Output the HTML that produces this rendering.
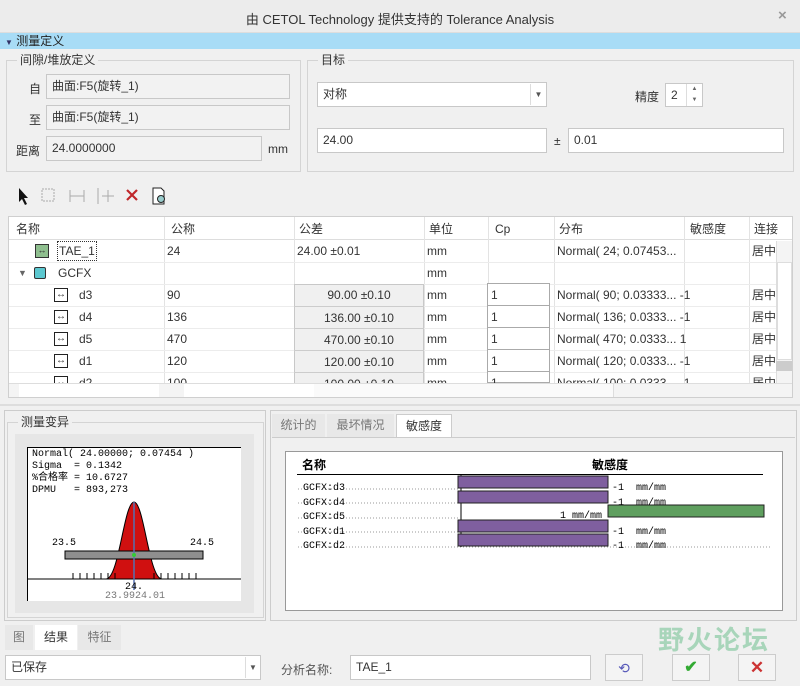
<!DOCTYPE html>
<html><head><meta charset="utf-8"><style>
*{box-sizing:border-box;margin:0;padding:0}
body{width:800px;height:686px;background:#f0f0f0;font-family:"Liberation Sans","Noto Sans CJK SC",sans-serif;font-size:12px;color:#333;position:relative;overflow:hidden}
.a{position:absolute}
.in{position:absolute;background:#fff;border:1px solid #c8c8c8;padding-left:5px;line-height:23px;font-size:12px;color:#333}
.ro{background:#f2f2f2}
.grp{position:absolute;border:1px solid #d4d4d4}
.gt{position:absolute;background:#f0f0f0;padding:0 3px;top:-9px;left:10px;line-height:16px;font-size:12px}
.tbl{position:absolute;left:8px;top:216px;width:785px;height:182px;background:#fff;border:1px solid #cfcfcf;overflow:hidden}
.c{position:absolute;line-height:22px;height:22px;white-space:nowrap;overflow:hidden}
.vl{position:absolute;top:0;width:1px;background:#e3e3e3}
.hl{position:absolute;left:0;height:1px;background:#ececec}
.mono{font-family:"Liberation Mono","Noto Sans CJK SC",monospace}
.dim{position:absolute;width:14px;height:14px;border:1px solid #222;background:#fff;font-size:10px;line-height:11px;text-align:center}
</style></head><body>
<div class="a" style="left:0;top:0;width:800px;height:33px;background:#ececec;border-bottom:1px solid #ddd"></div>
<div class="a" style="left:0;top:9px;width:800px;text-align:center;font-size:13px;color:#333">由 CETOL Technology 提供支持的 Tolerance Analysis</div>
<div class="a" style="left:778px;top:7px;font-size:15px;color:#999;font-weight:bold">×</div>
<div class="a" style="left:0;top:33px;width:800px;height:16px;background:#a8dcf6"></div>
<div class="a" style="left:5px;top:33px;line-height:16px;font-size:12px;color:#222"><span style="font-size:8px;color:#336">▼</span> 测量定义</div>

<div class="grp" style="left:6px;top:60px;width:295px;height:112px"><div class="gt">间隙/堆放定义</div></div>
<div class="a" style="left:29px;top:80px">自</div>
<div class="in ro" style="left:46px;top:74px;width:244px;height:25px">曲面:F5(旋转_1)</div>
<div class="a" style="left:29px;top:111px">至</div>
<div class="in ro" style="left:46px;top:105px;width:244px;height:25px">曲面:F5(旋转_1)</div>
<div class="a" style="left:16px;top:142px">距离</div>
<div class="in ro" style="left:46px;top:136px;width:216px;height:25px">24.0000000</div>
<div class="a" style="left:268px;top:142px">mm</div>

<div class="grp" style="left:307px;top:60px;width:487px;height:112px"><div class="gt">目标</div></div>
<div class="in" style="left:317px;top:82px;width:230px;height:25px">对称</div>
<div class="a" style="left:530px;top:84px;width:16px;height:21px;border-left:1px solid #ddd;font-size:8px;text-align:center;line-height:21px;color:#555">▼</div>
<div class="a" style="left:635px;top:88px">精度</div>
<div class="in" style="left:665px;top:83px;width:38px;height:24px">2</div>
<div class="a" style="left:686px;top:84px;width:16px;height:22px;border-left:1px solid #ddd;font-size:6px;text-align:center;line-height:11px;color:#666">▲<br>▼</div>
<div class="in" style="left:317px;top:128px;width:230px;height:25px">24.00</div>
<div class="a" style="left:554px;top:134px">±</div>
<div class="in" style="left:568px;top:128px;width:216px;height:25px">0.01</div>

<!-- toolbar -->
<svg class="a" style="left:12px;top:184px" width="170" height="22">
<path d="M7 4 L7 18 L10 15 L13 21 L15 20 L12 14 L16 14 Z" fill="#111"/>
<rect x="30" y="5" width="12" height="12" fill="none" stroke="#aaa" stroke-dasharray="2,1"/>
<path d="M58 6v12M72 6v12M58 12h14" stroke="#aaa" fill="none"/>
<path d="M86 4v16M90 12h12M96 6v12" stroke="#aaa" fill="none"/>
<path d="M115 6l10 10M125 6l-10 10" stroke="#c0262a" stroke-width="2.2"/>
<path d="M141 4h8l3 3v13h-11z" fill="#fff" stroke="#222"/><circle cx="149" cy="15" r="3.5" fill="#9cc" stroke="#222"/>
</svg>

<!-- table -->
<div class="tbl">
<div class="a" style="left:0;top:0;width:785px;height:23px;border-bottom:1px solid #ddd"></div>
<div class="vl" style="left:155px;height:166px"></div><div class="vl" style="left:285px;height:166px"></div><div class="vl" style="left:415px;height:166px"></div><div class="vl" style="left:479px;height:166px"></div><div class="vl" style="left:545px;height:166px"></div><div class="vl" style="left:675px;height:166px"></div><div class="vl" style="left:740px;height:166px"></div>
<div class="c" style="left:7px;top:1px">名称</div><div class="c" style="left:162px;top:1px">公称</div><div class="c" style="left:290px;top:1px">公差</div><div class="c" style="left:420px;top:1px">单位</div><div class="c" style="left:486px;top:1px">Cp</div><div class="c" style="left:550px;top:1px">分布</div><div class="c" style="left:681px;top:1px">敏感度</div><div class="c" style="left:745px;top:1px">连接</div>
<div class="hl" style="top:45px;width:767px"></div><div class="hl" style="top:67px;width:767px"></div><div class="hl" style="top:89px;width:767px"></div><div class="hl" style="top:111px;width:767px"></div><div class="hl" style="top:133px;width:767px"></div><div class="hl" style="top:155px;width:767px"></div>
<!-- row TAE -->
<div class="a" style="left:26px;top:27px;width:14px;height:14px;background:#8fbf8f;border:1px solid #333;font-size:9px;line-height:11px;text-align:center">↔</div>
<div class="c" style="left:48px;top:23px;border:1px dotted #333;line-height:18px;height:20px;top:24px;padding:0 1px">TAE_1</div>
<div class="c" style="left:158px;top:23px">24</div><div class="c" style="left:288px;top:23px">24.00 ±0.01</div><div class="c" style="left:418px;top:23px">mm</div><div class="c" style="left:548px;top:23px">Normal( 24; 0.07453...</div><div class="c" style="left:743px;top:23px">居中</div>
<!-- GCFX -->
<div class="c" style="left:9px;top:45px;font-size:9px;color:#666">▼</div>
<div class="a" style="left:25px;top:50px;width:12px;height:12px;background:#5cc8d0;border:1px solid #333;border-radius:2px"></div>
<div class="c" style="left:49px;top:45px">GCFX</div><div class="c" style="left:418px;top:45px">mm</div>
<!-- rows -->
<div class="dim" style="left:45px;top:71px">↔</div><div class="c" style="left:70px;top:67px">d3</div><div class="c" style="left:158px;top:67px">90</div>
<div class="dim" style="left:45px;top:93px">↔</div><div class="c" style="left:70px;top:89px">d4</div><div class="c" style="left:158px;top:89px">136</div>
<div class="dim" style="left:45px;top:115px">↔</div><div class="c" style="left:70px;top:111px">d5</div><div class="c" style="left:158px;top:111px">470</div>
<div class="dim" style="left:45px;top:137px">↔</div><div class="c" style="left:70px;top:133px">d1</div><div class="c" style="left:158px;top:133px">120</div>
<div class="dim" style="left:45px;top:159px">↔</div><div class="c" style="left:70px;top:155px">d2</div><div class="c" style="left:158px;top:155px">100</div>
<div class="a" style="left:285px;top:67px;width:130px;height:100px;background:#f0f0f0;border:1px solid #c8c8c8"></div>
<div class="c" style="left:285px;top:67px;width:130px;text-align:center">90.00 ±0.10</div>
<div class="c" style="left:285px;top:89px;width:130px;text-align:center;border-top:1px solid #ccc">136.00 ±0.10</div>
<div class="c" style="left:285px;top:111px;width:130px;text-align:center;border-top:1px solid #ccc">470.00 ±0.10</div>
<div class="c" style="left:285px;top:133px;width:130px;text-align:center;border-top:1px solid #ccc">120.00 ±0.10</div>
<div class="c" style="left:285px;top:155px;width:130px;text-align:center;border-top:1px solid #ccc">100.00 ±0.10</div>
<div class="a" style="left:478px;top:66px;width:63px;height:100px;background:#fff;border:1px solid #aaa"></div>
<div class="c" style="left:482px;top:67px">1</div><div class="c" style="left:482px;top:89px">1</div><div class="c" style="left:482px;top:111px">1</div><div class="c" style="left:482px;top:133px">1</div><div class="c" style="left:482px;top:155px">1</div>
<div class="a" style="left:478px;top:88px;width:63px;height:1px;background:#aaa"></div><div class="a" style="left:478px;top:110px;width:63px;height:1px;background:#aaa"></div><div class="a" style="left:478px;top:132px;width:63px;height:1px;background:#aaa"></div><div class="a" style="left:478px;top:154px;width:63px;height:1px;background:#aaa"></div>
<div class="c" style="left:418px;top:67px">mm</div><div class="c" style="left:418px;top:89px">mm</div><div class="c" style="left:418px;top:111px">mm</div><div class="c" style="left:418px;top:133px">mm</div><div class="c" style="left:418px;top:155px">mm</div>
<div class="c" style="left:548px;top:67px">Normal( 90; 0.03333... -1</div><div class="c" style="left:548px;top:89px">Normal( 136; 0.0333... -1</div><div class="c" style="left:548px;top:111px">Normal( 470; 0.0333... 1</div><div class="c" style="left:548px;top:133px">Normal( 120; 0.0333... -1</div><div class="c" style="left:548px;top:155px">Normal( 100; 0.0333... -1</div>
<div class="c" style="left:743px;top:67px">居中</div><div class="c" style="left:743px;top:89px">居中</div><div class="c" style="left:743px;top:111px">居中</div><div class="c" style="left:743px;top:133px">居中</div><div class="c" style="left:743px;top:155px">居中</div>
<!-- scrollbars -->
<div class="a" style="left:767px;top:24px;width:16px;height:142px;background:#f4f4f4;border-left:1px solid #ddd"></div>
<div class="a" style="left:768px;top:45px;width:15px;height:98px;background:#fff;border:1px solid #ddd"></div>
<div class="a" style="left:767px;top:144px;width:16px;height:10px;background:#ccc"></div>
<div class="a" style="left:0;top:166px;width:785px;height:16px;background:#f4f4f4;border-top:1px solid #ddd"></div>
<div class="a" style="left:10px;top:167px;width:140px;height:14px;background:#fff"></div>
<div class="a" style="left:175px;top:167px;width:130px;height:14px;background:#fff"></div>
<div class="a" style="left:305px;top:167px;width:300px;height:14px;background:#fafafa;border-right:1px solid #ddd"></div>
</div>
<div class="a" style="left:0;top:404px;width:800px;height:2px;background:#ddd"></div>

<!-- left bottom -->
<div class="a" style="left:4px;top:410px;width:262px;height:211px;border:1px solid #ccc"></div>
<div class="grp" style="left:7px;top:422px;width:257px;height:196px"><div class="gt" style="left:10px">测量变异</div></div>
<div class="a" style="left:15px;top:434px;width:239px;height:179px;background:#e6e6e6"></div>
<div class="a" style="left:27px;top:447px;width:214px;height:154px;background:#fff;border-top:1px solid #000;border-left:1px solid #000"></div>
<div class="a mono" style="left:32px;top:449px;font-size:10px;line-height:12px;color:#000;white-space:pre">Normal( 24.00000; 0.07454 )
Sigma  = 0.1342
%合格率 = 10.6727
DPMU   = 893,273</div>
<svg class="a" style="left:27px;top:447px" width="214" height="154">
<path d="M0 132 H214" stroke="#000"/>
<path d="M79 132 C92 132 97 55 107 55 C117 55 122 132 135 132 Z" fill="#d01010" stroke="#000"/>
<g stroke="#000"><path d="M46 126v6M53 126v6M60 126v6M67 126v6M74 126v6M81 126v6M88 126v6M127 126v6M134 126v6M141 126v6M148 126v6M155 126v6M162 126v6M169 126v6"/></g>
<rect x="38" y="104" width="138" height="8" fill="#8f8f8f" stroke="#000"/>
<path d="M107 55V143" stroke="#5570b0" stroke-width="1.5"/>
<circle cx="107" cy="108" r="2" fill="#3c3"/>
</svg>
<div class="a mono" style="left:52px;top:538px;font-size:10px;color:#000">23.5</div>
<div class="a mono" style="left:190px;top:538px;font-size:10px;color:#000">24.5</div>
<div class="a mono" style="left:125px;top:582px;font-size:10px;color:#000">24.</div>
<div class="a mono" style="left:105px;top:591px;font-size:10px;color:#777">23.9924.01</div>

<!-- right bottom -->
<div class="a" style="left:270px;top:410px;width:527px;height:211px;border:1px solid #ccc"></div>
<div class="a" style="left:272px;top:414px;width:53px;height:23px;background:#e8e8e8;color:#777;text-align:center;line-height:23px">统计的</div>
<div class="a" style="left:327px;top:414px;width:67px;height:23px;background:#e8e8e8;color:#777;text-align:center;line-height:23px">最坏情况</div>
<div class="a" style="left:396px;top:414px;width:56px;height:24px;background:#fff;border:1px solid #ccc;border-bottom:none;text-align:center;line-height:23px">敏感度</div>
<div class="a" style="left:272px;top:437px;width:523px;height:182px;background:#f0f0f0;border-top:1px solid #ccc"></div>
<div class="a" style="left:285px;top:451px;width:498px;height:160px;background:#fff;border:1px solid #999"></div>
<div class="a" style="left:302px;top:456px;font-weight:bold;font-size:12px;color:#000">名称</div>
<div class="a" style="left:592px;top:456px;font-weight:bold;font-size:12px;color:#000">敏感度</div>
<div class="a" style="left:297px;top:474px;width:466px;height:1px;background:#000"></div>
<svg class="a" style="left:290px;top:475px" width="490" height="80">
<g stroke="#999" stroke-dasharray="1,2"><path d="M8 14H170M8 28H170M8 43H170M8 57H170M8 72H480"/></g>
<path d="M171 0V72" stroke="#000"/>
<rect x="168" y="1" width="150" height="12" fill="#7f5f9f" stroke="#222"/>
<rect x="168" y="16" width="150" height="12" fill="#7f5f9f" stroke="#222"/>
<rect x="318" y="30" width="156" height="12" fill="#5f9f5f" stroke="#222"/>
<rect x="168" y="45" width="150" height="12" fill="#7f5f9f" stroke="#222"/>
<rect x="168" y="59" width="150" height="12" fill="#7f5f9f" stroke="#222"/>
</svg>
<div class="a mono" style="left:303px;top:482px;font-size:10px;line-height:14.5px;color:#000;white-space:pre;background:transparent">GCFX:d3
GCFX:d4
GCFX:d5
GCFX:d1
GCFX:d2</div>
<div class="a mono" style="left:612px;top:482px;font-size:10px;line-height:14.5px;color:#000;white-space:pre">-1  mm/mm
-1  mm/mm

-1  mm/mm
-1  mm/mm</div>
<div class="a mono" style="left:560px;top:511px;font-size:10px;color:#000">1  mm/mm</div>

<!-- bottom tabs -->
<div class="a" style="left:5px;top:625px;width:28px;height:25px;background:#e8e8e8;color:#777;text-align:center;line-height:25px">图</div>
<div class="a" style="left:35px;top:625px;width:42px;height:25px;background:#fff;text-align:center;line-height:25px">结果</div>
<div class="a" style="left:78px;top:625px;width:43px;height:25px;background:#e8e8e8;color:#777;text-align:center;line-height:25px">特征</div>
<div class="in" style="left:5px;top:655px;width:256px;height:25px">已保存</div>
<div class="a" style="left:245px;top:657px;width:15px;height:21px;border-left:1px solid #ddd;font-size:8px;text-align:center;line-height:21px;color:#555">▼</div>
<div class="a" style="left:281px;top:661px;color:#555">分析名称:</div>
<div class="in" style="left:350px;top:655px;width:241px;height:25px">TAE_1</div>
<div class="a" style="left:605px;top:654px;width:38px;height:27px;border:1px solid #ccc;background:#f4f4f4;text-align:center;line-height:26px;color:#5557b8;font-size:14px">⟲</div>
<div class="a" style="left:672px;top:654px;width:38px;height:27px;border:1px solid #ccc;background:#f4f4f4;text-align:center;line-height:26px;color:#3a3;font-size:16px;font-weight:bold">✔</div>
<div class="a" style="left:738px;top:654px;width:38px;height:27px;border:1px solid #ccc;background:#f4f4f4;text-align:center;line-height:26px;color:#c33;font-size:17px;font-weight:bold">✕</div>
<div class="a" style="left:658px;top:620px;font-size:26px;font-weight:bold;color:rgba(80,180,120,0.45);letter-spacing:2px">野火论坛</div>
</body></html>
